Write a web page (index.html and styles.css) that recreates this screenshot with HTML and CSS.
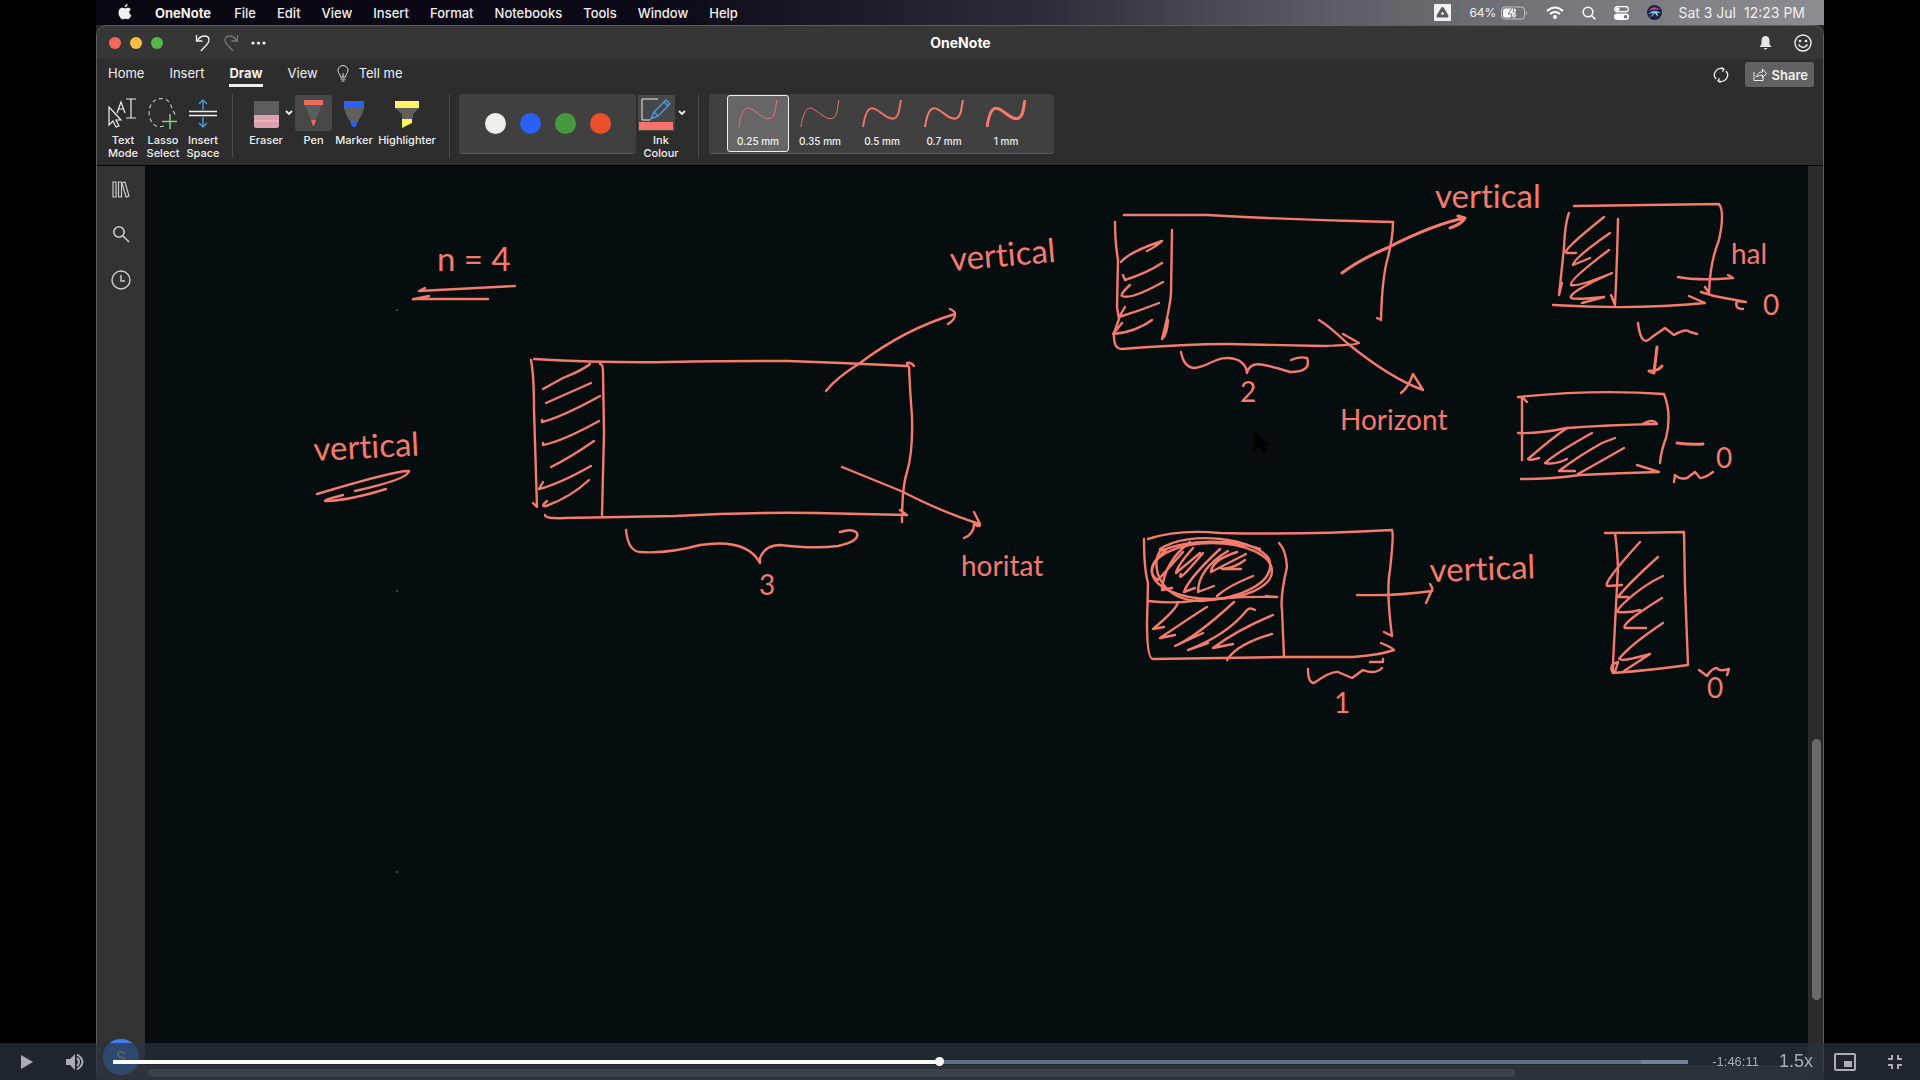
FILE: index.html
```html
<!DOCTYPE html>
<html lang="en">
<head>
<meta charset="utf-8">
<title>OneNote</title>
<link rel="stylesheet" href="styles.css">
</head>
<body>
<div class="desktop">
  <header class="menubar">
    <svg class="apple" viewBox="0 0 14 17" width="14" height="17" aria-hidden="true"><path d="M9.6 0c.1 1.600-1.200 3.200-2.800 3.200C6.600 1.700 8 .2 9.600 0zM7.200 4.400c.6 0 1.600-.8 3-.7 1 0 2 .5 2.700 1.500-2.400 1.500-2 4.900.5 5.900-.7 1.900-2 4.200-3.300 4.200-1 0-1.400-.6-2.600-.6s-1.600.6-2.600.6C2.900 15.300.5 11.700.5 8.500c0-3 1.800-4.700 3.700-4.700 1.300 0 2.200.6 3 .6z" fill="currentColor"/></svg>
    <nav class="menus">
      <a href="#" class="app-name">OneNote</a><a href="#">File</a><a href="#">Edit</a><a href="#">View</a><a href="#">Insert</a><a href="#">Format</a><a href="#">Notebooks</a><a href="#">Tools</a><a href="#">Window</a><a href="#">Help</a>
    </nav>
    <div class="status">
      <svg viewBox="0 0 17 17" width="17" height="17"><rect width="17" height="17" rx="1" fill="#f1f1f3"/><path d="M8.500 4.500L13 12H4z" fill="none" stroke="#5c5b62" stroke-width="3" stroke-linejoin="round"/></svg>
      <span class="battery"><span>64%</span>
      <svg viewBox="0 0 27 14" width="27" height="14"><rect x=".5" y="1" width="23" height="12" rx="3" fill="none" stroke="#c4c4c8"/><rect x="2" y="2.500" width="13" height="9" rx="2" fill="#fff"/><path d="M25 5v4q2-2 0-4" fill="#c4c4c8"/><path d="M12 1L7 8h4l-1 5 6-7h-4l1-5z" fill="#fff" stroke="#77767c"/></svg></span>
      <svg viewBox="0 0 18 14" width="18" height="14" fill="none" stroke="#fff" stroke-width="2"><path d="M1 5q8-7 16 0M4 8q5-4 10 0"/><circle cx="9" cy="11" r="1"/></svg>
      <svg viewBox="0 0 14 14" width="14" height="14" fill="none" stroke="#fff" stroke-width="1.500"><circle cx="6" cy="6" r="4.800"/><path d="M9.500 9.500L13.500 13.500"/></svg>
      <svg viewBox="0 0 15 14" width="15" height="14"><rect x=".7" y=".7" width="13.600" height="5" rx="2.500" fill="none" stroke="#fff" stroke-width="1.200"/><circle cx="3.500" cy="3.200" r="2" fill="#fff"/><rect x="0" y="7.500" width="15" height="6.500" rx="3.200" fill="#fff"/><circle cx="11.500" cy="10.700" r="1.800" fill="#707076"/></svg>
      <svg viewBox="0 0 15 15" width="15" height="15"><circle cx="7.500" cy="7.500" r="7.500" fill="#21213e"/><path d="M2 6q5-7 11-1-6-2-11 1" fill="#d04c91"/><path d="M1 9q6-6 13-1-4 0-6 0-2 3-5 4 2-2 3-4z" fill="#55bdf0"/><path d="M4 7l6 1 1 4-3-4z" fill="#fff"/></svg>
      <time class="date">Sat 3 Jul</time><time class="clock">12:23 PM</time>
    </div>
  </header>

  <main class="window">
    <header class="titlebar">
      <div class="title-left">
        <span class="light red"></span><span class="light yellow"></span><span class="light green"></span>
        <button class="plain undo" aria-label="Undo"><svg viewBox="0 0 16 18" width="16" height="18" fill="none" stroke="#f2f2f2" stroke-width="1.300"><path d="M1.500 1v6h6M2 7c4-7 12-6 12-1 0 4-4 6-8 11"/></svg></button>
        <button class="plain" aria-label="Redo"><svg viewBox="0 0 16 18" width="16" height="18" fill="none" stroke="#777" stroke-width="1.300"><path d="M14.500 1v6h-6M14 7C10 0 2 1 2 6c0 4 4 6 8 11"/></svg></button>
        <button class="plain" aria-label="More"><svg viewBox="0 0 15 4" width="15" height="4" fill="#f2f2f2"><circle cx="2" cy="2" r="1.600"/><circle cx="7.500" cy="2" r="1.600"/><circle cx="13" cy="2" r="1.600"/></svg></button>
      </div>
      <h1>OneNote</h1>
      <div class="title-right">
        <button class="plain" aria-label="Notifications"><svg viewBox="0 0 13 14" width="13" height="14" fill="#e4e4e4"><path d="M6.500 0C4 0 2.500 2 2.500 4.500V8L.5 11h12l-2-3V4.500C10.500 2 9 0 6.500 0zM4.500 12h4q-2 3-4 0"/></svg></button>
        <button class="plain" aria-label="Feedback"><svg viewBox="0 0 18 18" width="18" height="18" fill="none" stroke="#eee" stroke-width="1.400"><circle cx="9" cy="9" r="8"/><path d="M4.500 10.500q4.500 6 9 0"/><g fill="#eee" stroke="none"><circle cx="6" cy="7" r="1.300"/><circle cx="12" cy="7" r="1.300"/></g></svg></button>
      </div>
    </header>

    <section class="ribbon">
      <div class="tabs">
        <nav><a href="#">Home</a><a href="#">Insert</a><a href="#" class="current">Draw</a><a href="#">View</a></nav>
        <button class="plain tell"><svg viewBox="0 0 12 17" width="12" height="17" fill="none" stroke="#ddd"><path d="M3.500 12c0-3-2.500-3.500-2.500-6.500a5 5 0 0 1 10 0c0 3-2.500 3.500-2.500 6.500zM3.500 14h5M4.500 16h3M6 12V8"/></svg>Tell me</button>
        <div class="share-area">
          <button class="plain" aria-label="Sync"><svg viewBox="0 0 16 16" width="16" height="16" fill="none" stroke="#eee" stroke-width="1.300"><path d="M3 12A6.300 6.300 0 0 1 10.500 2.200M13 4a6.300 6.300 0 0 1-7.500 9.800M8.500.5l2.500 1.700-1.500 2.600M7.500 15.500L5 13.800l1.500-2.600"/></svg></button>
          <button class="share"><svg viewBox="0 0 14 13" width="14" height="13" fill="none" stroke="#eee"><path d="M1 4v8.500h9V9M3.500 9q1-5 6-5V1l4 4.500-4 4V7Q6 7 3.500 9z"/></svg>Share</button>
        </div>
      </div>

      <div class="tools">
        <div class="group modes">
          <button class="tool"><svg viewBox="0 0 30 32" width="30" height="32" fill="none" stroke="#eee" stroke-width="1.200"><path d="M1 9v18l4-4 3 6 3-1-3-6h5zM9 15l4-11 4 11M10.500 11h5M18 1h10M23 1v19M18 20h10"/></svg><span>Text<br>Mode</span></button>
          <button class="tool"><svg viewBox="0 0 30 32" width="30" height="32" fill="none"><path d="M16 28C4 32-1 18 2 9 6-2 18-1 22 5l3 8q2 2 2 5" stroke="#bbb" stroke-width="1.200" stroke-dasharray="4 3"/><path d="M22 16v15M14 23.500h15" stroke="#80cf88" stroke-width="1.500"/></svg><span>Lasso<br>Select</span></button>
          <button class="tool"><svg viewBox="0 0 30 32" width="30" height="32" fill="none"><path d="M15 12V2M11 6l4-4 4 4M15 19v10M11 25l4 4 4-4" stroke="#4b9ad8" stroke-width="1.400"/><path d="M1 13.500h28M1 17.500h28" stroke="#f0f0f0" stroke-width="1.500"/></svg><span>Insert<br>Space</span></button>
        </div>
        <div class="group pens">
          <button class="tool eraser"><svg viewBox="0 0 25 32" width="25" height="32"><path d="M0 3h25v14H0z" fill="#5d5d5d"/><path d="M0 17h25v11q0 2-2 2H2q-2 0-2-2z" fill="#dfa0ae"/><path d="M0 23h25" stroke="#efc0cb"/></svg><span>Eraser</span></button>
          <button class="plain chev" aria-label="Eraser options"><svg viewBox="0 0 8 6" width="8" height="6" fill="none" stroke="#eee" stroke-width="1.800"><path d="M1 1l3 3 3-3"/></svg></button>
          <button class="tool pen"><svg viewBox="0 0 37 36" width="37" height="36"><path d="M9 5h19v5H9z" fill="#ef6a60"/><path d="M10 10h17l-6 15h-5z" fill="#5c5c5c"/><path d="M16 25h5l-2 6h-1z" fill="#ef6a60"/></svg><span>Pen</span></button>
          <button class="tool marker"><svg viewBox="0 0 22 32" width="22" height="32"><path d="M1 3h20v7H1z" fill="#2a61fa"/><path d="M1 10h20q-1 6-6 13H7Q2 16 1 10" fill="#606060"/><path d="M7 23h8q-1 4-3 6h-2q-2-2-3-6" fill="#2a61fa"/></svg><span>Marker</span></button>
          <button class="tool highlighter"><svg viewBox="0 0 26 32" width="26" height="32"><path d="M1 3h24v7H1z" fill="#fbf466"/><path d="M1 10h24l-6 6v5H8v-5z" fill="#606060"/><path d="M8 21h10v4L8 30z" fill="#fbf466"/></svg><span>Highlighter</span></button>
        </div>
        <div class="group colours">
          <div class="palette">
            <button class="swatch white" aria-label="White"></button><button class="swatch blue" aria-label="Blue"></button><button class="swatch green" aria-label="Green"></button><button class="swatch orange" aria-label="Orange"></button>
          </div>
          <button class="tool ink-colour"><svg viewBox="0 0 37 36" width="37" height="36"><path d="M0 0h37v36H0z" fill="#474747"/><path d="M20 4H4v21h8" fill="none" stroke="#eee"/><path d="M13 24l3-7L28 5l4 4-12 12zM26 7l4 4M16 17l4 4" fill="none" stroke="#4e9be0" stroke-width="1.400"/><path d="M1 27h34v8H1z" fill="#f57468"/></svg><span>Ink<br>Colour</span></button>
          <button class="plain chev" aria-label="Ink options"><svg viewBox="0 0 8 6" width="8" height="6" fill="none" stroke="#eee" stroke-width="1.800"><path d="M1 1l3 3 3-3"/></svg></button>
        </div>
        <div class="group widths">
          <div class="width-list">
            <button class="nib selected"><svg viewBox="0 0 40 32" width="40" height="32"><path class="n25" d="M1 28C4 8 9 7 15 11s13 11 18 8 4-10 6-18"/></svg>0.25 mm</button>
            <button class="nib"><svg viewBox="0 0 40 32" width="40" height="32"><path class="n35" d="M1 28C4 8 9 7 15 11s13 11 18 8 4-10 6-18"/></svg>0.35 mm</button>
            <button class="nib"><svg viewBox="0 0 40 32" width="40" height="32"><path class="n50" d="M1 28C4 8 9 7 15 11s13 11 18 8 4-10 6-18"/></svg>0.5 mm</button>
            <button class="nib"><svg viewBox="0 0 40 32" width="40" height="32"><path class="n70" d="M1 28C4 8 9 7 15 11s13 11 18 8 4-10 6-18"/></svg>0.7 mm</button>
            <button class="nib"><svg viewBox="0 0 40 32" width="40" height="32"><path class="n100" d="M1 28C4 8 9 7 15 11s13 11 18 8 4-10 6-18"/></svg>1 mm</button>
          </div>
        </div>
      </div>
    </section>

    <div class="workspace">
      <aside class="sidebar">
        <button class="plain" aria-label="Notebooks"><svg viewBox="0 0 18 17" width="18" height="17" fill="none" stroke="#ccc" stroke-width="1.200"><path d="M1 1h3v15H1zM6.500 1h3v15h-3zM10 2l3-1 4 14-3 1z"/></svg></button>
        <button class="plain" aria-label="Search"><svg viewBox="0 0 18 18" width="18" height="18" fill="none" stroke="#ccc" stroke-width="1.600"><circle cx="7" cy="7" r="5.200"/><path d="M11 11l6 6"/></svg></button>
        <button class="plain" aria-label="Recent notes"><svg viewBox="0 0 20 20" width="20" height="20" fill="none" stroke="#ccc" stroke-width="1.400"><circle cx="10" cy="10" r="9"/><path d="M10 5v6h4"/></svg></button>
        <div class="avatar">S</div>
      </aside>
      <div class="page">
        <svg class="ink" viewBox="145 166 1663 899" preserveAspectRatio="xMinYMin meet">
          <g class="words">
            <text x="437" y="271" class="large">n = 4</text>
            <text x="314" y="461" class="large" transform="rotate(-3 314 461)">vertical</text>
            <text x="951" y="271" class="large" transform="rotate(-5 951 271)">vertical</text>
            <text x="961" y="576">horitat</text>
            <text x="759" y="595">3</text>
            <text x="1240" y="402">2</text>
            <text x="1340" y="430">Horizont</text>
            <text x="1435" y="208" class="large">vertical</text>
            <text x="1731" y="264">hal</text>
            <text x="1763" y="315">0</text>
            <text x="1716" y="468">0</text>
            <text x="1430" y="582" class="large" transform="rotate(-2 1430 582)">vertical</text>
            <text x="1334" y="713">1</text>
            <text x="1707" y="698">0</text>
          </g>
          <g class="strokes">
            <path d="M425 288l-6 3 96-5M429 296q-20 4-15 3l74 0M317 494q80-24 92-23 0 8-54 20M343 495q-24 6-16 6 24-1 59-12"/>
            <path d="M534 359q70 4 134 3t120-1q60 2 120 5l-1-3q4-1 7 3M531 360q3 15 3 50l3 97-4-4M600 364q3 0 3 8l1 61-2 82M909 367q1 25 3 50 1 35-5 55-5 15-5 50M545 515q0 4 20 3l110-2q70-4 141-3l91 2-7-5"/>
            <path d="M543 389l20-11q20-8 27-14M546 403l45-20M542 420v2q20-5 58-26M543 443v2q20-4 56-24M551 467q20-10 43-26M543 482l-4 7q20-5 52-23M547 501q-7 6-1 5 25-9 43-26"/>
            <path d="M826 391q10-13 34-28 45-34 95-49M950 309q6 3 5 5 0 6-7 10M842 467l59 24q43 22 79 33M974 512l6 12q0 4-6 0 0 10-10 14"/>
            <path d="M626 530q2 21 14 22 27 2 60-7 47-7 60 18v-5q5-13 20-13 34 4 58 1 22-5 19-13-5-5-17-1"/>
            <path d="M1124 215h83q90 5 186 7 0 15-5 35-6 20-7 63l-4-2M1115 222q0 21 3 38l-1 47 2 12-5 14q-1 16 8 16 65-5 105-5l96 2q34-1 36-3l-16-9M1172 230l-1 63q-1 15-9 46 5-3 6-19"/>
            <path d="M1121 262q8-10 41-21-5 5-15 10M1162 263q-15 10-37 17l-2-5M1163 282q-32 18-41 14-2-2 8-11M1159 303q-20 8-40 14l6-10M1152 320q-16 12-39 14l9-11"/>
            <path class="bold" d="M1342 273q17-13 45-25 47-24 78-30-3 6-15 10M1458 216l7 2"/>
            <path d="M1319 320q10 6 28 23 43 35 76 47l-10-16q-5 14-12 19M1181 352q3 16 14 16c15-2 25-15 43-8q9 5 9 13c3-14 17-9 43-1q22 0 17-14-8-2-16 2"/>
            <path d="M1574 206q76-1 145-2 6 8 0 36-9 22-10 53l-4-6M1569 213q-4 10-5 35l-5 47 3-12M1553 305q82 5 152-2l-16-7M1618 219q-1 47-3 86l-4-10"/>
            <path d="M1604 217q-45 36-37 36h9M1610 233q-36 25-37 32l17-7M1609 250q-40 30-38 35 7 2 41-12-45 20-41 25 5 2 33-1l-22 6"/>
            <path d="M1678 277q20 4 55 1l-5-3M1701 292l13 4 32 6-9-1q-3 8 6 8M1638 323q3 26 14 14l13-9 9 7q12-7 16-3l7 2"/>
            <path class="bold" d="M1657 347l-3 26-5-2q10 0 13-5M1677 443q15 2 26 1"/>
            <path d="M1518 397q76-8 146-3 8 20 2 44-5 13-6 25M1522 398v62M1518 433q20 1 49-5 40-3 90-4-4-6-14 0M1521 479q30 0 59-4 40-2 79-3l-22-7M1522 397l5 5"/>
            <path d="M1567 428q-15 10-39 31 1 2 11-1M1592 433q-36 20-47 30 10 2 22-4M1615 438l-13 5q-25 14-43 28h16M1624 448q-28 16-46 26M1674 482l1-7q5 5 12 3l8-6 5 6q5 0 13-6"/>
            <path d="M1144 539q0 30 4 44l-1 40q0 36 6 36l134-2 66 0q27-2 41-7-3-3-13-7M1148 539q30-10 72-6 80 2 172-3 2 4-2 40-4 20 2 66l-8-4M1279 543q7 7 8 24-7 30-5 43l2 47M1148 601q16 2 35 1 47-6 94-5M1266 596l10 1"/>
            <ellipse cx="1212" cy="571" rx="60" ry="28"/><path d="M1160 549c30-20 96-10 109 10 8 24-30 40-69 42-40-1-50-35-40-50 30-12 70-12 100-2"/>
            <path d="M1166 550q-24 20-8 30l25-28M1190 542q-26 20-28 48l10-2M1203 553q-27 32-22 21M1193 548q-16 18-17 25l24-20M1220 549q-32 30-36 43l11-4M1228 551q-30 18-30 41l16-6M1237 552q-25 8-26 20l35-18M1245 560q-10 8-23 9l19 0M1253 576q-25 10-36 20"/>
            <path d="M1178 602q-1 7-25 27l11-2M1207 607q-7 4-47 31l15-3M1234 602q-38 35-59 44l28-13M1255 610q-5-3-8 0-20 25-59 40l20-7M1273 615q-36 15-60 33l20-4M1272 634q-35 10-45 26"/>
            <path d="M1357 595q40 1 75-4M1430 584q4 5 1 8l-5 11M1308 669q0 14 6 14 17-12 24-11l14 6 11-8q12 5 19-2M1370 662h13v-3"/>
            <path d="M1605 533q40 0 79-1l1 55 3 78q-35 5-75 8-5-8 5-11l-3 10M1615 533q2 14 3 34l-5 96v10"/>
            <path d="M1640 542q-40 44-32 44l14-1M1658 557q-30 27-40 40h10M1663 576q-20 9-39 27-10 10-5 9 10 1 21-2M1662 598q-42 26-37 30l21 0M1663 623q-33 22-44 36 3 3 31-5l-26 17M1699 670l8 6q5-8 10-8 2 4 12 1l-2 6"/>
          </g>
          <path d="M1254 431v20l5-4 4 7 4-2-3-6h6z" fill="#000"/>
          <g fill="#4a5252"><circle cx="397" cy="310" r="1"/><circle cx="397" cy="591" r="1"/><circle cx="397" cy="872" r="1"/></g>
        </svg>
        <div class="h-scroll"><div class="h-thumb"></div></div>
      </div>
      <div class="v-scroll"><div class="v-thumb"></div></div>
    </div>
  </main>
</div>

<footer class="player">
  <button class="plain" aria-label="Play"><svg viewBox="0 0 12 14" width="12" height="14" fill="#aaaeb2"><path d="M0 0l12 7-12 7z"/></svg></button>
  <button class="plain volume" aria-label="Mute"><svg viewBox="0 0 18 18" width="18" height="18"><path d="M0 6h4l5-5v16l-5-5H0z" fill="#aaaeb2"/><path d="M11 5q4 4 0 8M11 1.500q11 7.500 0 15" fill="none" stroke="#aaaeb2" stroke-width="2"/></svg></button>
  <input type="range" class="seek" aria-label="Seek" min="0" max="1000" value="525">
  <span class="remaining">-1:46:11</span>
  <button class="plain rate">1.5x</button>
  <button class="plain pip" aria-label="Picture in picture"><svg viewBox="0 0 22 18" width="22" height="18"><rect x="1" y="1" width="20" height="16" rx="1" fill="none" stroke="#aaaeb2" stroke-width="2"/><path d="M10 8h8v6h-8z" fill="#aaaeb2"/></svg></button>
  <button class="plain" aria-label="Exit full screen"><svg viewBox="0 0 14 14" width="14" height="14" fill="none" stroke="#aaaeb2" stroke-width="2"><path d="M0 4h4V0M10 0v4h4M0 10h4v4M10 14v-4h4"/></svg></button>
</footer>
</body>
</html>
```
FILE: styles.css
```css
* { box-sizing: border-box; }

body {
  margin: 0;
  background: #000;
  color: #f0f0f0;
  font-family: Inter, "Liberation Sans", sans-serif;
  font-size: 13px;
}

a { color: inherit; text-decoration: none; }
button { font: inherit; color: inherit; border: 0; padding: 0; }
svg { display: block; flex: none; }

.plain { background: none; display: flex; align-items: center; }

.desktop {
  width: 90%;
  min-height: 100vh;
  margin: 0 auto;
  display: flex;
  flex-direction: column;
  background: #242424;
}

/* System menu bar */
.menubar {
  display: flex;
  align-items: center;
  height: 25px;
  padding: 0 19px 0 22px;
  background: linear-gradient(90deg, #080611 0%, #0d0a17 33%, #2f2c39 55%, #5f5e66 72%, #77767b 85%, #8d8c90 100%);
}
.apple { margin-right: 23px; }
.menus { display: flex; gap: 21px; font-weight: 500; }
.app-name { margin-right: 2px; font-weight: 700; }
.status { display: flex; align-items: center; gap: 18px; margin-left: auto; }
.battery { display: flex; align-items: center; gap: 5px; font-size: 12px; }
.status time { white-space: nowrap; font-size: 14px; }
.status .date { margin-left: -2px; }
.status .clock { margin-left: -10px; }

/* Application window */
.window {
  flex: 1;
  display: flex;
  flex-direction: column;
  border: 1px solid #5d5d5d;
  border-width: 1px 1px 0;
  border-radius: 10px;
  overflow: hidden;
  background: #2d2d2d;
}
.titlebar {
  display: grid;
  grid-template-columns: 1fr auto 1fr;
  align-items: center;
  height: 33px;
  padding: 0 11px 0 12px;
  background: #363636;
}
.titlebar h1 { margin: 0; font-size: 14px; font-weight: 700; color: #fff; }
.title-left { display: flex; align-items: center; gap: 12px; }
.light { width: 12px; height: 12px; border-radius: 50%; }
.light + .light { margin-left: -3px; }
.red { background: #f4695c; }
.yellow { background: #f7bd45; }
.green { background: #55b848; }
.undo { margin-left: 20px; }
.title-right { display: flex; justify-content: flex-end; gap: 22px; }

.ribbon { height: 107px; border-bottom: 1px solid #000; }
.tabs { display: flex; align-items: flex-start; height: 35px; padding: 3px 9px 0 11px; }
.tabs nav { display: flex; gap: 25px; }
.tabs nav a { line-height: 22px; border-bottom: 3px solid transparent; }
.tabs nav .current { font-weight: 700; border-color: #eee; }
.tell { gap: 10px; margin-left: 19px; line-height: 22px; }
.share-area { display: flex; align-items: center; gap: 16px; margin-left: auto; }
.share {
  display: flex;
  align-items: center;
  gap: 5px;
  height: 25px;
  padding: 0 6px 0 8px;
  border-radius: 3px;
  background: #626262;
  font-weight: 600;
}

.tools { display: flex; height: 64px; }
.group { display: flex; align-items: flex-start; border-right: 1px solid #4a4a4a; }
.tool {
  display: flex;
  flex-direction: column;
  align-items: center;
  gap: 4px;
  padding: 4px 0 0;
  background: none;
  font-size: 11px;
  font-weight: 500;
  line-height: 13px;
}
.modes { width: 136px; padding-left: 6px; }
.modes .tool { width: 40px; }
.pens { width: 217px; padding-left: 14px; }
.pens .tool, .colours .tool { height: 64px; }
.eraser { width: 38px; }
.chev { height: 38px; }
.pen { width: 37px; margin-left: 2px; }
.pen, .colours .ink-colour { padding-top: 1px; gap: 3px; }
.pen svg { background: #484848; border-radius: 3px; }
.marker { width: 44px; }
.highlighter { width: 62px; }
.colours { width: 249px; padding-left: 9px; }
.palette {
  display: flex;
  align-items: center;
  justify-content: center;
  gap: 14px;
  width: 177px;
  height: 60px;
  margin-right: 2px;
  border-radius: 3px;
  border-bottom: 1px solid #5a5a5a;
  background: #404040;
}
.swatch { width: 21px; height: 21px; border-radius: 50%; }
.white { background: #efeeeb; }
.blue { background: #2c5ff6; }
.swatch.green { background: #45993f; }
.orange { background: #ea512b; }
.ink-colour { width: 46px; }
.ink-colour svg { align-self: flex-start; }
.colours .chev { margin-left: -6px; }
.widths { border: 0; padding-left: 10px; }
.width-list {
  display: flex;
  height: 60px;
  padding: 1px 17px 0 18px;
  border-radius: 3px;
  border-bottom: 1px solid #5a5a5a;
  background: #404040;
}
.nib {
  display: flex;
  flex-direction: column;
  align-items: center;
  gap: 4px;
  width: 62px;
  height: 57px;
  padding: 3px 0 0;
  border: 1px solid transparent;
  border-radius: 3px;
  background: none;
  font-size: 10px;
  font-weight: 500;
}
.nib.selected { border-color: #eee; background: #666; }
.nib path { fill: none; stroke: #e8736a; }
.n25 { stroke-width: 1; }
.n35 { stroke-width: 1; }
.n50 { stroke-width: 2; }
.n70 { stroke-width: 2; }
.nib .n70, .nib .n100 { stroke: #f97a6d; }
.n100 { stroke-width: 3; }

/* Notebook page */
.workspace { flex: 1; display: flex; min-height: 0; }
.sidebar {
  display: flex;
  flex-direction: column;
  align-items: center;
  gap: 27px;
  width: 48px;
  padding-top: 15px;
  background: #333;
}
.avatar {
  width: 36px;
  height: 36px;
  margin: auto 0 5px;
  border-radius: 50%;
  background: #3b83ea;
  color: #dfe6ef;
  font-size: 16px;
  line-height: 36px;
  text-align: center;
}
.page { flex: 1; display: flex; flex-direction: column; min-width: 0; background: #050d0e; }
.ink { flex: 1; width: 100%; min-height: 0; }
.strokes { fill: none; stroke: #f47b6e; stroke-width: 2.4; stroke-linecap: round; stroke-linejoin: round; }
.bold { stroke-width: 3; }
.words { fill: #f47b6e; font-family: Lato, sans-serif; font-size: 28px; font-variant-ligatures: none; }
.large { font-size: 33px; }
.h-scroll { height: 15px; padding: 4px 3px; background: #333; }
.h-thumb { width: 82.5%; height: 8px; border-radius: 4px; background: #6c6c6c; }
.v-scroll { display: flex; flex-direction: column; width: 15px; padding: 0 2px 80px 4px; background: #2b2b2c; }
.v-thumb { height: 261px; margin-top: auto; border-radius: 5px; background: #6a6a6a; }

/* Video controls laid over the picture */
.player {
  position: fixed;
  left: 0;
  right: 0;
  bottom: 0;
  display: flex;
  align-items: center;
  height: 37px;
  padding: 0 18px 0 21px;
  background: rgba(43, 51, 63, .72);
  color: #aaaeb2;
  font-family: "Liberation Sans", Arial, sans-serif;
}
.volume { margin-left: 33px; }
.seek {
  flex: 1;
  appearance: none;
  height: 8px;
  margin: 0 24px 0 29px;
  background: none;
}
.seek::-webkit-slider-runnable-track {
  height: 4px;
  background: linear-gradient(90deg, #fff 52.5%, #5e7088 52.5%, #5e7088 97%, #71839b 97%);
}
.seek::-webkit-slider-thumb {
  appearance: none;
  width: 9px;
  height: 9px;
  margin-top: -3px;
  border-radius: 50%;
  background: #fff;
}
.remaining { font-size: 13px; }
.rate { margin-left: 20px; font-size: 18px; }
.pip { margin: 0 32px 0 21px; }
```
